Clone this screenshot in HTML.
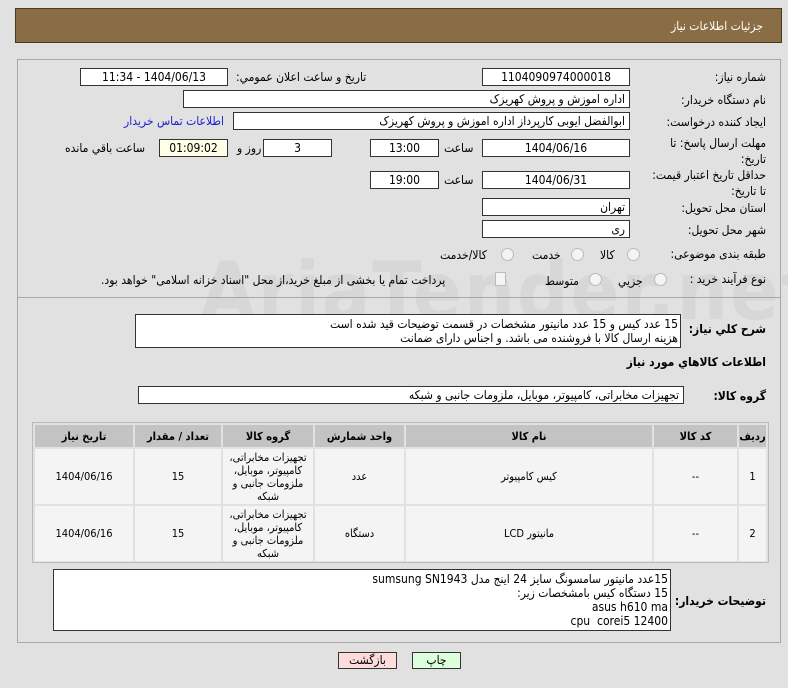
<!DOCTYPE html>
<html><head><meta charset="utf-8"><style>
body{margin:0;width:788px;height:688px;background:#e1e1e1;font-family:"DejaVu Sans Condensed","Liberation Sans","DejaVu Sans",sans-serif;font-size:12px;color:#000;position:relative;overflow:hidden;direction:rtl}
.a{position:absolute}
.hdr{left:15px;top:8px;width:767px;height:35px;background:#8b6d45;border:1px solid #4a3a22;box-sizing:border-box}
.hdr span{position:absolute;right:18px;top:10px;color:#fff;font-size:12px}
.panel{left:17px;top:59px;width:764px;height:584px;border:1px solid #a8a8a8;box-sizing:border-box}
.box{position:absolute;background:#fff;border:1px solid #333;box-sizing:border-box;height:18px;line-height:16px;text-align:center;font-size:12px;white-space:nowrap;overflow:hidden}
.r{text-align:right;padding-right:4px}
.lbl{position:absolute;white-space:nowrap;font-size:12px}
.rad{position:absolute;width:11px;height:11px;border:1px solid #bbb;border-radius:50%;background:#f4f4f4}
table{border-collapse:separate;border-spacing:2px;font-size:11px;table-layout:fixed}
th{background:#c3c3c3;height:22px;font-weight:bold;padding:0}
td{background:#f4f4f4;text-align:center;line-height:13px;height:55px;padding:0;overflow:hidden}
.btn{position:absolute;height:17px;border:1px solid #333;box-sizing:border-box;text-align:center;line-height:15px;font-size:12px}
.wm{left:200px;top:245px;font-size:80px;font-weight:bold;color:rgba(150,150,150,0.12);direction:ltr;letter-spacing:2px}
</style></head><body>
<div class="a hdr"><span>جزئیات اطلاعات نیاز</span></div>
<div class="a panel"></div>
<div class="a wm">AriaTender.net</div>

<div class="lbl" style="right:22px;top:70px">شماره نیاز:</div>
<div class="box" style="left:482px;top:68px;width:148px">1104090974000018</div>
<div class="lbl" style="left:236px;top:70px">تاریخ و ساعت اعلان عمومي:</div>
<div class="box" style="left:80px;top:68px;width:148px">1404/06/13 - 11:34</div>

<div class="lbl" style="right:22px;top:93px">نام دستگاه خریدار:</div>
<div class="box r" style="left:183px;top:90px;width:447px">اداره اموزش و پروش کهریزک</div>

<div class="lbl" style="right:22px;top:115px">ایجاد کننده درخواست:</div>
<div class="box r" style="left:233px;top:112px;width:397px">ابوالفضل ایوبی کارپرداز اداره اموزش و پروش کهریزک</div>
<div class="lbl" style="left:124px;top:114px;color:#2020d0">اطلاعات تماس خریدار</div>

<div class="lbl" style="right:22px;top:135px;line-height:16px;text-align:right">مهلت ارسال پاسخ: تا<br>تاریخ:</div>
<div class="box" style="left:482px;top:139px;width:148px">1404/06/16</div>
<div class="lbl" style="left:444px;top:141px">ساعت</div>
<div class="box" style="left:370px;top:139px;width:69px">13:00</div>
<div class="box" style="left:263px;top:139px;width:69px">3</div>
<div class="lbl" style="left:237px;top:141px">روز و</div>
<div class="box" style="left:159px;top:139px;width:69px;background:#ffffe8">01:09:02</div>
<div class="lbl" style="left:65px;top:141px">ساعت باقي مانده</div>

<div class="lbl" style="right:22px;top:167px;line-height:16px;text-align:right">حداقل تاریخ اعتبار قیمت:<br>تا تاریخ:</div>
<div class="box" style="left:482px;top:171px;width:148px">1404/06/31</div>
<div class="lbl" style="left:444px;top:173px">ساعت</div>
<div class="box" style="left:370px;top:171px;width:69px">19:00</div>

<div class="lbl" style="right:22px;top:201px">استان محل تحویل:</div>
<div class="box r" style="left:482px;top:198px;width:148px">تهران</div>
<div class="lbl" style="right:22px;top:223px">شهر محل تحویل:</div>
<div class="box r" style="left:482px;top:220px;width:148px">ری</div>

<div class="lbl" style="right:22px;top:247px">طبقه بندی موضوعی:</div>
<div class="rad" style="left:627px;top:248px"></div><div class="lbl" style="left:600px;top:248px">کالا</div>
<div class="rad" style="left:571px;top:248px"></div><div class="lbl" style="left:532px;top:248px">خدمت</div>
<div class="rad" style="left:501px;top:248px"></div><div class="lbl" style="left:440px;top:248px">کالا/خدمت</div>

<div class="lbl" style="right:22px;top:272px">نوع فرآیند خرید :</div>
<div class="rad" style="left:654px;top:273px"></div><div class="lbl" style="left:618px;top:274px">جزیي</div>
<div class="rad" style="left:589px;top:273px"></div><div class="lbl" style="left:545px;top:274px">متوسط</div>
<div class="a" style="left:495px;top:272px;width:9px;height:12px;border:1px solid #bbb;background:#f4f4f4"></div>
<div class="lbl" style="left:101px;top:273px">پرداخت تمام یا بخشی از مبلغ خرید،از محل "اسناد خزانه اسلامی" خواهد بود.</div>

<div class="a" style="left:17px;top:297px;width:764px;border-top:1px solid #a8a8a8"></div>

<div class="lbl" style="right:22px;top:322px;font-weight:bold">شرح کلي نیاز:</div>
<div class="box" style="left:135px;top:314px;width:546px;height:34px;text-align:right;line-height:14px;padding:2px 2px 0 0">15 عدد کیس و 15 عدد مانیتور مشخصات در قسمت توضیحات قید شده است<br>هزینه ارسال کالا با فروشنده می باشد. و اجناس دارای ضمانت</div>

<div class="lbl" style="right:22px;top:355px;font-weight:bold">اطلاعات کالاهاي مورد نیاز</div>

<div class="lbl" style="right:22px;top:389px;font-weight:bold">گروه کالا:</div>
<div class="box r" style="left:138px;top:386px;width:546px">تجهیزات مخابراتی، کامپیوتر، موبایل، ملزومات جانبی و شبکه</div>

<div class="a" style="left:32px;top:422px;border:1px solid #bbb;width:735px;height:139px;overflow:hidden">
<table style="width:735px">
<tr><th style="width:27px">ردیف</th><th style="width:83px">کد کالا</th><th style="width:246px">نام کالا</th><th style="width:89px">واحد شمارش</th><th style="width:90px">گروه کالا</th><th style="width:86px">تعداد / مقدار</th><th>تاریخ نیاز</th></tr>
<tr><td>1</td><td>--</td><td>کیس کامپیوتر</td><td>عدد</td><td>تجهیزات مخابراتی، کامپیوتر، موبایل، ملزومات جانبی و شبکه</td><td>15</td><td>1404/06/16</td></tr>
<tr><td>2</td><td>--</td><td>مانیتور LCD</td><td>دستگاه</td><td>تجهیزات مخابراتی، کامپیوتر، موبایل، ملزومات جانبی و شبکه</td><td>15</td><td>1404/06/16</td></tr>
</table></div>

<div class="lbl" style="right:22px;top:594px;font-weight:bold">توضیحات خریدار:</div>
<div class="box" style="left:53px;top:569px;width:618px;height:62px;text-align:right;line-height:14px;padding:2px 2px 0 0">15عدد مانیتور سامسونگ سایز 24 اینج مدل sumsung SN1943<br>15 دستگاه کیس بامشخصات زیر:<br>asus h610 ma<br>cpu&nbsp; corei5 12400</div>

<div class="btn" style="left:338px;top:652px;width:59px;background:#ffdcdc">بازگشت</div>
<div class="btn" style="left:412px;top:652px;width:49px;background:#dcffdc">چاپ</div>
</body></html>
